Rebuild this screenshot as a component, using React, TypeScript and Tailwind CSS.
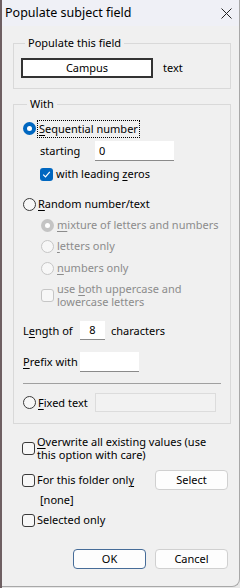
import React from "react";

const F = { fontFamily: '"Noto Sans", "Segoe UI", Arial, sans-serif' };

function Radio({ checked, disabled }: { checked?: boolean; disabled?: boolean }) {
  if (checked) {
    return (
      <span
        className={`w-[13px] h-[13px] shrink-0 rounded-full flex items-center justify-center ${
          disabled ? "bg-[#c4c4c4]" : "bg-[#0067c0]"
        }`}
      >
        <span className="w-[5px] h-[5px] rounded-full bg-white" />
      </span>
    );
  }
  return (
    <span
      className={`w-[13px] h-[13px] shrink-0 rounded-full border bg-[#f7f7f7] ${
        disabled ? "border-[#c6c6c6]" : "border-[#3a3a3a]"
      }`}
    />
  );
}

function Check({ checked, disabled }: { checked?: boolean; disabled?: boolean }) {
  if (checked) {
    return (
      <span className="w-[13px] h-[13px] shrink-0 rounded-[3px] bg-[#0067c0] flex items-center justify-center">
        <svg width="9" height="9" viewBox="0 0 9 9">
          <path d="M1.2 4.6 L3.5 6.9 L7.8 1.8" fill="none" stroke="white" strokeWidth="1.2" />
        </svg>
      </span>
    );
  }
  return (
    <span
      className={`w-[13px] h-[13px] shrink-0 rounded-[3px] border bg-[#f7f7f7] ${
        disabled ? "border-[#c6c6c6]" : "border-[#3a3a3a]"
      }`}
    />
  );
}

function U({ children }: { children: React.ReactNode }) {
  return <span className="underline underline-offset-[2px]">{children}</span>;
}

export default function App() {
  return (
    <div className="w-[240px] h-[588px] bg-[#e8e8e8] flex text-[11px] leading-[16px] text-black whitespace-nowrap" style={F}>
      <div className="w-[2px] h-full bg-[#6e5f62]" />
      <div className="flex-1 h-[587px] flex flex-col bg-[#f0f0f0] border-r border-b border-[#a8a8a8] rounded-br-[8px] overflow-hidden">
        <div className="h-[26px] shrink-0 bg-[#eff0f6] flex items-center justify-between pl-[3px] pr-[7px]">
          <span className="text-[12.5px]">Populate subject field</span>
          <svg width="11" height="11" viewBox="0 0 11 11">
            <path d="M0.5 0.5 L10.5 10.5 M10.5 0.5 L0.5 10.5" stroke="#222" strokeWidth="1" />
          </svg>
        </div>

        <fieldset className="mt-[9px] ml-[11px] mr-[8px] border border-[#d9d9d9] pl-[7px] pr-[7px] pt-[7px] pb-[10px]">
          <legend className="ml-[4px] px-[3px]">Populate this field</legend>
          <div className="flex items-center">
            <div className="w-[132px] h-[20px] border-2 border-[#333] bg-white flex items-center justify-center">Campus</div>
            <span className="ml-[10px]">text</span>
          </div>
        </fieldset>

        <fieldset className="mt-[7px] ml-[11px] mr-[8px] border border-[#d9d9d9] pl-[9px] pr-[8px] pt-[8px] pb-[11px]">
          <legend className="ml-[4px] px-[3px]">With</legend>
          <div className="flex items-center h-[17px]">
            <Radio checked />
            <span className="ml-[2px] outline-1 outline-dotted outline-black px-[1px]">
              <U>S</U>equential number
            </span>
          </div>
          <div className="flex items-center mt-[4px] pl-[17px] h-[20px]">
            <span className="w-[55px]">starting</span>
            <div className="w-[79px] h-[20px] bg-white border-b border-[#8a8a8a] flex items-center px-[4px]">0</div>
          </div>
          <div className="flex items-center mt-[5px] pl-[17px] h-[16px]">
            <Check checked />
            <span className="ml-[3px]">
              with leading <U>z</U>eros
            </span>
          </div>
          <div className="flex items-center mt-[14px] h-[16px]">
            <Radio />
            <span className="ml-[2px]">
              <U>R</U>andom number/text
            </span>
          </div>
          <div className="pl-[18px] text-[#8c8c8c]">
            <div className="flex items-center mt-[5px] h-[16px]">
              <Radio checked disabled />
              <span className="ml-[3px]">
                <U>m</U>ixture of letters and numbers
              </span>
            </div>
            <div className="flex items-center mt-[5px] h-[16px]">
              <Radio disabled />
              <span className="ml-[3px]">
                <U>l</U>etters only
              </span>
            </div>
            <div className="flex items-center mt-[6px] h-[16px]">
              <Radio disabled />
              <span className="ml-[3px]">
                <U>n</U>umbers only
              </span>
            </div>
            <div className="flex items-center mt-[6px]">
              <Check disabled />
              <span className="ml-[3px] leading-[13px]">
                use <U>b</U>oth uppercase and
                <br />
                lowercase letters
              </span>
            </div>
          </div>
          <div className="flex items-center mt-[13px] h-[19px]">
            <span className="w-[57px]">
              L<U>e</U>ngth of
            </span>
            <div className="w-[25px] h-[19px] bg-white border-b border-[#8a8a8a] flex items-center justify-center">8</div>
            <span className="ml-[6px]">characters</span>
          </div>
          <div className="flex items-center mt-[12px] h-[20px]">
            <span className="w-[57px]">
              <U>P</U>refix with
            </span>
            <div className="w-[59px] h-[20px] bg-white border-b border-[#8a8a8a]" />
          </div>
          <div className="mt-[11px] mr-[1px] h-[1px] bg-[#a0a0a0]" />
          <div className="flex items-center mt-[9px] h-[19px]">
            <Radio />
            <span className="ml-[2px] w-[57px]">
              <U>F</U>ixed text
            </span>
            <div className="w-[121px] h-[19px] bg-[#f2f2f2] border border-[#dcdcdc]" />
          </div>
        </fieldset>

        <div className="pl-[20px] pr-[11px]">
          <div className="flex items-center mt-[11px]">
            <Check />
            <span className="ml-[2px] leading-[13px]">
              <U>O</U>verwrite all existing values (use
              <br />
              this option with care)
            </span>
          </div>
          <div className="flex items-center justify-between mt-[9px] h-[20px]">
            <div className="flex items-center">
              <Check />
              <span className="ml-[2px]">
                For this folder onl<U>y</U>
              </span>
            </div>
            <div className="w-[73px] h-[20px] bg-[#fdfdfd] border border-[#d0d0d0] rounded-[4px] flex items-center justify-center">
              Select
            </div>
          </div>
          <div className="pl-[18px] mt-[2px] h-[16px] flex items-center">[none]</div>
          <div className="flex items-center mt-[4px] h-[16px]">
            <Check />
            <span className="ml-[2px]">Selected only</span>
          </div>
          <div className="flex justify-end gap-[9px] mt-[21px]">
            <div className="w-[73px] h-[20px] bg-[#fdfdfd] border border-[#466c98] rounded-[4px] flex items-center justify-center">
              OK
            </div>
            <div className="w-[73px] h-[20px] bg-[#fdfdfd] border border-[#d0d0d0] rounded-[4px] flex items-center justify-center">
              Cancel
            </div>
          </div>
        </div>
      </div>
    </div>
  );
}
